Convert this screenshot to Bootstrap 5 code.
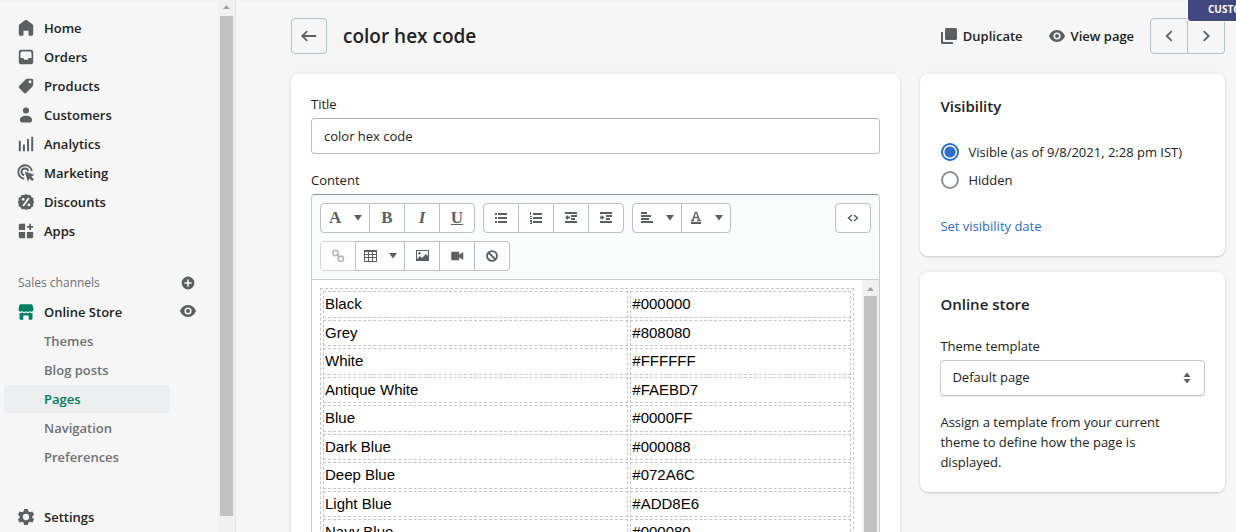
<!DOCTYPE html>
<html lang="en">
<head>
<meta charset="utf-8">
<meta name="viewport" content="width=device-width, initial-scale=1">
<title>color hex code</title>
<link href="https://cdn.jsdelivr.net/npm/bootstrap@5.3.0/dist/css/bootstrap.min.css" rel="stylesheet">
<style>
  body { font-family: "Open Sans", "Noto Sans", sans-serif; font-size: 13px; line-height: 20px; color: #202223; background: #f6f6f6; }
  svg { display: block; flex: none; fill: #5c5f62; }
  .app-shell { box-shadow: inset 0 1px 0 #f1f1f1; }
  .side-panel { width: 236px; border-right: 1px solid #e4e5e7; }
  .side-menu { padding: 14px 0 0 4px; width: 200px; }
  .menu-item { display: flex; align-items: center; gap: 9px; height: 28px; margin-bottom: 1px; padding-left: 13px; color: #202223; font-weight: 600; text-decoration: none; border-radius: 4px; }
  .menu-sub { width: 166px; padding-left: 40px; color: #6d7175; }
  .menu-sub.active { background: #edeeef; color: #007a5c; }
  .section-title { margin-top: 24px; height: 28px; margin-bottom: 1px; padding-left: 14px; font-size: 12px; color: #6d7175; font-weight: 500; }
  .settings-item { margin-top: 32px; }
  .store-mark { fill: #008060; }
  .plain-btn { border: 0; background: none; padding: 0; }
  .scroll-rail { width: 17px; background: #f1f1f1; align-items: center; }
  .scroll-rail svg { fill: #a3a3a3; height: 16px; }
  .scroll-thumb { width: 13px; background: #c1c1c1; }
  .main-area { padding: 18px 11px 0 55px; }
  .square-btn { width: 38px; height: 36px; border: 1px solid #babfc3; border-radius: 4px; background: transparent; padding: 0; display: flex; align-items: center; justify-content: center; }
  .back-btn { width: 36px; }
  .pager .square-btn + .square-btn { width: 37px; }
  h1 { font-size: 19px; line-height: 28px; font-weight: 600; }
  h2 { font-size: 15px; line-height: 24px; font-weight: 600; margin-bottom: 20px; }
  .action-link { color: #202223; font-weight: 600; text-decoration: none; gap: 6px; }
  .actions { gap: 26px; margin-right: 16px; }
  .page-grid { display: grid; grid-template-columns: 2fr 1fr; column-gap: 20px; margin-top: 20px; }
  .panel { background: #fff; border-radius: 8px; padding: 20px; box-shadow: 0 0 5px rgba(23,24,24,.06), 0 1px 2px rgba(0,0,0,.15); }
  .field { height: 36px; border: 1px solid #babfc3; border-top-color: #aeb4b9; border-radius: 4px; font-size: 13px; padding: 0 12px; color: #202223; }
  .field-label { display: block; margin-bottom: 4px; }
  .form-select.field { padding: 0 11px; border-color: #c9cccf; border-bottom-color: #babfc3; background-position: right 12px center; background-size: 10px 12px; box-shadow: 0 1px 0 rgba(0,0,0,.05);
    background-image: url("data:image/svg+xml,%3csvg xmlns='http://www.w3.org/2000/svg' viewBox='0 0 10 12'%3e%3cpath fill='%235c5f62' d='M5 .5 8.500 5h-7zM5 11.500 1.500 7h7z'/%3e%3c/svg%3e"); }
  .editor { border: 1px solid #c9cccf; border-top-color: #8c9196; border-radius: 4px 4px 0 0; }
  .editor-tools { background: #fafbfb; padding: 8px; border-bottom: 1px solid #c9cccf; border-radius: 4px 4px 0 0; }
  .tool-btn { height: 30px; min-width: 36px; padding: 0 10px; border: 1px solid #babfc3; background: #fff; border-radius: 4px; display: flex; align-items: center; justify-content: center; color: #5c5f62; font-family: "Liberation Serif", serif; font-weight: 700; font-size: 17px; line-height: 20px; }
  .tool-btn.wide { width: 50px; justify-content: space-between; padding: 0 6px 0 8px; }
  .tool-btn.off { border-color: #d2d5d8; }
  .tool-btn.off svg { opacity: .45; }
  .editor-body { padding: 8px; }
  .color-table { width: 100%; table-layout: fixed; border: 1px dashed #c6c6c6; border-collapse: separate; border-spacing: 2px; font-family: "Liberation Sans", Arial, sans-serif; font-size: 15px; line-height: 1.5; color: #000; }
  .color-table td { border: 1px dashed #c6c6c6; padding: 1px; }
  .color-table td:first-child { width: 58%; }
  .radio-row { height: 28px; gap: 9px; }
  .radio-row .form-check-input { width: 18px; height: 18px; margin: 0 0 0 1px; border: 2px solid #8c9196; }
  .radio-row .form-check-input:checked { border-color: #2c6ecb; background: radial-gradient(circle, #2c6ecb 5px, #fff 6px); }
  .date-link { color: #2c6ecb; text-decoration: none; margin-top: 22px; }
  .corner-tag { position: absolute; top: 0; right: 0; width: 49px; height: 22px; overflow: hidden; background: #41477f; border: solid #fff; border-width: 0 0 1px 1px; border-radius: 0 0 0 4px; color: #fff; font-size: 10px; line-height: 19px; font-weight: 700; padding-left: 20px; white-space: nowrap; }
</style>
</head>
<body>
<div class="app-shell d-flex vh-100 overflow-hidden position-relative">
  <aside class="side-panel d-flex flex-shrink-0 justify-content-between">
    <nav class="side-menu" aria-label="Main">
      <a class="menu-item" href="#"><svg width="18" height="18" viewBox="0 0 20 20"><path d="M18 7.300V17c0 .8-.7 1.500-1.500 1.500h-2.300c-.8 0-1.400-.6-1.400-1.400V13H7.200v4.100c0 .8-.6 1.400-1.400 1.400H3.500C2.700 18.500 2 17.800 2 17V7.300c0-.5.200-.9.600-1.200l6.600-4.900c.5-.3 1.100-.3 1.600 0l6.600 4.900c.4.300.6.700.6 1.200z"/></svg>Home</a>
      <a class="menu-item" href="#"><svg width="18" height="18" viewBox="0 0 20 20"><path fill-rule="evenodd" d="M4.500 2h11A2.500 2.500 0 0 1 18 4.500v11a2.500 2.500 0 0 1-2.500 2.500h-11A2.500 2.500 0 0 1 2 15.500v-11A2.500 2.500 0 0 1 4.500 2zM5 4l-1 1-.3 6.200H7l1 1.900h4l1-1.900h3.300L16 5l-1-1z"/></svg>Orders</a>
      <a class="menu-item" href="#"><svg width="18" height="18" viewBox="0 0 20 20"><path fill-rule="evenodd" d="M11 2h5.500A1.500 1.500 0 0 1 18 3.500V9c0 .5-.2 1-.6 1.400l-7 7.200c-.8.800-2 .8-2.800 0l-5-5c-.8-.8-.8-2 0-2.800l7.200-7.200c.3-.4.700-.6 1.200-.6zM14.500 7a1.700 1.700 0 1 0 0-3.400 1.700 1.700 0 0 0 0 3.400z"/></svg>Products</a>
      <a class="menu-item" href="#"><svg width="18" height="18" viewBox="0 0 20 20"><circle cx="10" cy="5" r="3.400"/><path d="M10 10.700c4 0 6.800 1.900 6.800 4.500 0 2-.9 3-2.300 3h-9c-1.400 0-2.300-1-2.300-3 0-2.600 2.800-4.500 6.800-4.500z"/></svg>Customers</a>
      <a class="menu-item" href="#"><svg width="18" height="18" viewBox="0 0 20 20"><path d="M2 6.500h2.200V18H2zM6.600 10.500h2.200V18H6.600zM11.200 4.500h2.200V18h-2.200zM15.800 2H18v16h-2.200z"/></svg>Analytics</a>
      <a class="menu-item" href="#"><svg width="18" height="18" viewBox="0 0 20 20"><path d="M8 16.500A7.600 7.600 0 1 1 16.600 8M8 12.500A3.800 3.800 0 1 1 12.500 8" fill="none" stroke="#5c5f62" stroke-width="2"/><path d="M8.500 8.200 19.500 12l-3.700 2 3 3-2 2-3-3-1.700 3.500z"/></svg>Marketing</a>
      <a class="menu-item" href="#"><svg width="18" height="18" viewBox="0 0 20 20"><path d="m10 1 2.200 1.300 2.600-.1 1.200 2.200 2.200 1.200-.1 2.700L19 10l-1 2.200.2 2.400-2.200 1.300-1.200 2.100-2.600-.2L10 19l-2.200-1.200-2.600.2L4 15.900l-2.200-1.300.1-2.400L1 10l.9-1.700-.1-2.700L4 4.400l1.200-2.200 2.600.1z"/><g fill="#f6f6f6"><circle cx="6.800" cy="7" r="1.500"/><circle cx="13.200" cy="13.200" r="1.500"/><path d="m12.300 5 1.700 1-6.300 9L6 14z"/></g></svg>Discounts</a>
      <a class="menu-item" href="#"><svg width="18" height="18" viewBox="0 0 20 20"><path d="M3.500 2H9v7H2V3.500C2 2.700 2.700 2 3.500 2zM2 11h7v7H3.500c-.8 0-1.500-.7-1.500-1.500zM11 11h7v5.500c0 .8-.7 1.500-1.500 1.500H11zM13.600 2h2v2.500H18v2h-2.400V9h-2V6.500h-2.500v-2h2.500z"/></svg>Apps</a>
      <div class="section-title d-flex align-items-center justify-content-between">Sales channels
        <button class="plain-btn me-1" type="button" aria-label="Add sales channel"><svg width="16" height="16" viewBox="0 0 20 20"><path d="M10 2a8 8 0 1 0 0 16 8 8 0 0 0 0-16zM9 5.500h2V9h3.500v2H11v3.500H9V11H5.500V9H9z"/></svg></button>
      </div>
      <div class="d-flex justify-content-between">
        <a class="menu-item" href="#"><svg class="store-mark" width="18" height="18" viewBox="0 0 20 20"><path d="M4 1.500h12c.6 0 1 .3 1.200.8L18.200 6v1.300a2.300 2.300 0 0 1-4 1.600 2.800 2.800 0 0 1-4.200 0 2.800 2.800 0 0 1-4.200 0 2.300 2.300 0 0 1-4-1.600V6l1-3.700c.2-.5.6-.8 1-.8zM2.800 11.200c1.100.2 2.200 0 3-.6 1.200.9 3 .9 4.200 0 1.200.9 3 .9 4.200 0 .8.600 1.900.8 3 .6v6.300c0 .6-.4 1-1 1H13V14H7v4.500H3.800c-.6 0-1-.4-1-1z"/></svg>Online Store</a>
        <button class="plain-btn me-1 mb-1" type="button" aria-label="View your online store"><svg width="16" height="16" viewBox="0 0 20 20"><path fill-rule="evenodd" d="M10 2.500C4.500 2.500 1.200 7 0 10c1.200 3 4.500 7.500 10 7.500s8.800-4.500 10-7.500c-1.200-3-4.500-7.500-10-7.500zM10 5.500a4.500 4.500 0 1 1 0 9 4.500 4.500 0 0 1 0-9z"/><circle cx="10" cy="10" r="2.500"/></svg></button>
      </div>
      <a class="menu-item menu-sub" href="#">Themes</a>
      <a class="menu-item menu-sub" href="#">Blog posts</a>
      <a class="menu-item menu-sub active" href="#" aria-current="page">Pages</a>
      <a class="menu-item menu-sub" href="#">Navigation</a>
      <a class="menu-item menu-sub" href="#">Preferences</a>
      <a class="menu-item settings-item" href="#"><svg width="18" height="18" viewBox="0 0 20 20"><path fill-rule="evenodd" d="M8 1h4l.6 2.700 1.700 1L17 3.900l2 3.400-2 1.900v1.600l2 1.900-2 3.400-2.700-.8-1.700 1L12 19H8l-.6-2.700-1.700-1-2.700.8-2-3.400 2-1.900V9.200L1 7.300l2-3.400 2.700.8 1.700-1zM10 6.500a3.500 3.500 0 1 0 0 7 3.500 3.500 0 0 0 0-7z"/></svg>Settings</a>
    </nav>
    <div class="scroll-rail d-flex flex-column" aria-hidden="true"><svg width="9" height="16" viewBox="0 0 9 16"><path d="M1 9l3.500-4L8 9z"/></svg><div class="scroll-thumb flex-grow-1 mb-3"></div></div>
  </aside>

  <main class="main-area flex-grow-1">
    <header class="d-flex align-items-center">
      <button class="square-btn back-btn" type="button" aria-label="Back"><svg width="18" height="18" viewBox="0 0 20 20"><path d="M18 10H3M8 4.500 2.500 10 8 15.500" fill="none" stroke="#5c5f62" stroke-width="2"/></svg></button>
      <h1 class="mb-0 ms-3">color hex code</h1>
      <div class="actions d-flex ms-auto">
        <a class="action-link d-flex align-items-center" href="#"><svg width="16" height="16" viewBox="0 0 16 16"><path d="M5.500 0h9A1.500 1.500 0 0 1 16 1.500v9a1.500 1.500 0 0 1-1.500 1.500h-9A1.500 1.500 0 0 1 4 10.500v-9A1.500 1.500 0 0 1 5.500 0zM0 4h2v10h10v2H1.500A1.500 1.500 0 0 1 0 14.500z"/></svg>Duplicate</a>
        <a class="action-link d-flex align-items-center" href="#"><svg width="16" height="16" viewBox="0 0 20 20"><path fill-rule="evenodd" d="M10 2.500C4.500 2.500 1.200 7 0 10c1.200 3 4.500 7.500 10 7.500s8.800-4.500 10-7.500c-1.200-3-4.500-7.500-10-7.500zM10 5.500a4.500 4.500 0 1 1 0 9 4.500 4.500 0 0 1 0-9z"/><circle cx="10" cy="10" r="2.500"/></svg>View page</a>
      </div>
      <div class="pager btn-group">
        <button class="square-btn rounded-end-0" type="button" aria-label="Previous"><svg width="18" height="18" viewBox="0 0 20 20"><path d="M13 4.500 7.500 10l5.500 5.500" fill="none" stroke="#5c5f62" stroke-width="2"/></svg></button>
        <button class="square-btn rounded-start-0 border-start-0" type="button" aria-label="Next"><svg width="18" height="18" viewBox="0 0 20 20"><path d="M7.500 4.500 13 10l-5.500 5.500" fill="none" stroke="#5c5f62" stroke-width="2"/></svg></button>
      </div>
    </header>

    <div class="page-grid align-items-start">
      <section class="panel">
        <label class="field-label" for="title">Title</label>
        <input class="form-control field mb-3" id="title" type="text" value="color hex code">
        <div class="field-label" id="contentLabel">Content</div>
        <div class="editor" role="group" aria-labelledby="contentLabel">
          <div class="editor-tools d-flex flex-wrap gap-2">
            <div class="btn-group">
              <button class="btn tool-btn wide" type="button" aria-label="Formatting">A<svg width="10" height="6" viewBox="0 0 10 6"><path d="M1 0h8L5 5.500z"/></svg></button>
              <button class="btn tool-btn" type="button">B</button>
              <button class="btn tool-btn fst-italic" type="button">I</button>
              <button class="btn tool-btn text-decoration-underline" type="button">U</button>
            </div>
            <div class="btn-group">
              <button class="btn tool-btn" type="button" aria-label="Bulleted list"><svg width="14" height="12" viewBox="0 0 14 12"><path d="M1 1h2v2H1zM4 1h9v2H4zM1 5h2v2H1zM4 5h9v2H4zM1 9h2v2H1zM4 9h9v2H4z"/></svg></button>
              <button class="btn tool-btn" type="button" aria-label="Numbered list"><svg width="14" height="12" viewBox="0 0 14 12"><path d="M4 1h9v2H4zM4 5h9v2H4zM4 9h9v2H4zM1 0h1v3H1zM1 4h2v1H2v1h1v1H1V6h1V5H1zM1 8h2v4H1v-1h1v-1H1z"/></svg></button>
              <button class="btn tool-btn" type="button" aria-label="Outdent"><svg width="14" height="12" viewBox="0 0 14 12"><path d="M1 0h12v2H1zM7 3h6v2H7zM7 6h4v2H7zM1 9h12v2H1zM1 5.500 4 3v1.500h2v2H4V8z"/></svg></button>
              <button class="btn tool-btn" type="button" aria-label="Indent"><svg width="14" height="12" viewBox="0 0 14 12"><path d="M1 0h12v2H1zM7 3h6v2H7zM7 6h4v2H7zM1 9h12v2H1zM5.500 5.500 2.500 3v1.500H1v2h1.500V8z"/></svg></button>
            </div>
            <div class="btn-group">
              <button class="btn tool-btn wide" type="button" aria-label="Alignment"><svg width="13" height="12" viewBox="0 0 13 12"><path d="M0 0h6v2H0zM0 3h10v2H0zM0 6h8v2H0zM0 9h12v2H0z"/></svg><svg width="10" height="6" viewBox="0 0 10 6"><path d="M1 0h8L5 5.500z"/></svg></button>
              <button class="btn tool-btn wide" type="button" aria-label="Color"><svg width="13" height="14" viewBox="0 0 13 14"><path d="M1 11h10v2H1z"/><path d="M1 9.500h3M7 9.500h4M2.500 9.500l3-8h1l3 8M4 6.500h4" fill="none" stroke="#5c5f62" stroke-width="1.300"/></svg><svg width="10" height="6" viewBox="0 0 10 6"><path d="M1 0h8L5 5.500z"/></svg></button>
            </div>
            <button class="btn tool-btn ms-auto" type="button" aria-label="Show HTML"><svg width="12" height="8" viewBox="0 0 12 8"><path d="M5 1 1.500 4 5 7M7 1l3.500 3L7 7" fill="none" stroke="#5c5f62" stroke-width="1.500"/></svg></button>
            <div class="btn-group me-auto">
              <button class="btn tool-btn off" type="button" aria-label="Insert link"><svg width="14" height="14" viewBox="0 0 14 14"><g fill="none" stroke="#5c5f62" stroke-width="1.600"><circle cx="4.500" cy="4" r="2.700"/><circle cx="9.800" cy="9.800" r="2.700"/><path d="m5.500 5.200 3.300 3.400"/></g></svg></button>
              <button class="btn tool-btn wide" type="button" aria-label="Insert table"><svg width="13" height="12" viewBox="0 0 13 12"><path fill-rule="evenodd" d="M0 0h13v12H0zM1 2v2h3V2zM5 2v2h3V2zM9 2v2h3V2zM1 5v2h3V5zM5 5v2h3V5zM9 5v2h3V5zM1 8v3h3V8zM5 8v3h3V8zM9 8v3h3V8z"/></svg><svg width="10" height="6" viewBox="0 0 10 6"><path d="M1 0h8L5 5.500z"/></svg></button>
              <button class="btn tool-btn" type="button" aria-label="Insert image"><svg width="13" height="12" viewBox="0 0 13 12"><path fill-rule="evenodd" d="M0 0h13v11H0zM1 1v8l3-3 2 2 4-4 2 2V1zM3.500 2a1.300 1.300 0 1 1 0 2.600 1.300 1.300 0 0 1 0-2.600z"/></svg></button>
              <button class="btn tool-btn" type="button" aria-label="Insert video"><svg width="13" height="10" viewBox="0 0 13 10"><path d="M.5 1H8v3l4-2.500v7L8 6v3H.5z" stroke="#5c5f62" stroke-width=".5"/></svg></button>
              <button class="btn tool-btn" type="button" aria-label="Clear formatting"><svg width="12" height="12" viewBox="0 0 12 12"><g fill="none" stroke="#5c5f62" stroke-width="1.900"><circle cx="6" cy="6" r="4.900"/><path d="m2.500 2.500 7 7"/></g></svg></button>
            </div>
          </div>
          <div class="d-flex">
            <div class="editor-body flex-grow-1">
              <table class="color-table">
                <tbody>
                  <tr><td>Black</td><td>#000000</td></tr>
                  <tr><td>Grey</td><td>#808080</td></tr>
                  <tr><td>White</td><td>#FFFFFF</td></tr>
                  <tr><td>Antique White</td><td>#FAEBD7</td></tr>
                  <tr><td>Blue</td><td>#0000FF</td></tr>
                  <tr><td>Dark Blue</td><td>#000088</td></tr>
                  <tr><td>Deep Blue</td><td>#072A6C</td></tr>
                  <tr><td>Light Blue</td><td>#ADD8E6</td></tr>
                  <tr><td>Navy Blue</td><td>#000080</td></tr>
                </tbody>
              </table>
            </div>
            <div class="scroll-rail d-flex flex-column flex-shrink-0" aria-hidden="true"><svg width="9" height="16" viewBox="0 0 9 16"><path d="M1 11l3.500-4L8 11z"/></svg><div class="scroll-thumb flex-grow-1"></div></div>
          </div>
        </div>
      </section>

      <div class="d-flex flex-column gap-3">
        <section class="panel">
          <h2>Visibility</h2>
          <div class="radio-row d-flex align-items-center"><input class="form-check-input" type="radio" name="visibility" id="visible" checked><label for="visible">Visible (as of 9/8/2021, 2:28 pm IST)</label></div>
          <div class="radio-row d-flex align-items-center"><input class="form-check-input" type="radio" name="visibility" id="hidden"><label for="hidden">Hidden</label></div>
          <a class="date-link d-block" href="#">Set visibility date</a>
        </section>
        <section class="panel">
          <h2>Online store</h2>
          <label class="field-label" for="template">Theme template</label>
          <select class="form-select field mb-3" id="template"><option>Default page</option></select>
          <p class="mb-0 pe-3">Assign a template from your current theme to define how the page is displayed.</p>
        </section>
      </div>
    </div>
  </main>
  <div class="corner-tag">CUSTO</div>
</div>
<script src="https://cdn.jsdelivr.net/npm/bootstrap@5.3.0/dist/js/bootstrap.bundle.min.js"></script>
</body>
</html>
